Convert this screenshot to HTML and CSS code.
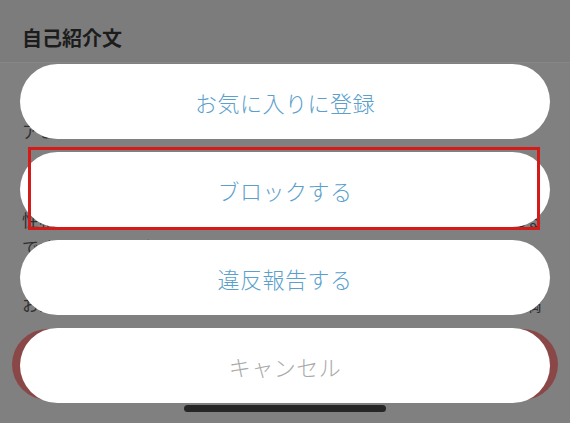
FILE: index.html
```html
<!DOCTYPE html>
<html lang="ja">
<head>
    <meta charset="UTF-8">
    <meta name="viewport" content="width=device-width, initial-scale=1.0">
    <title>プロフィール</title>
    <link rel="stylesheet" href="styles.css">
</head>
<body>

    <div class="page">
        <div class="page-header">自己紹介文</div>
        <div class="page-body">
            <p class="label">アピールポイント</p>
            <p class="para">性格は明るく、誰とでもすぐ仲良くなれるタイプだとよく言われる</p>
            <p class="para">です。よろしくお願いします。</p>
            <p class="para gap">お互い楽しく過ごせる方と出会えたら嬉しいです。休日を一緒に満</p>
            <div class="main-btn"></div>
        </div>
    </div>

    <!-- action sheet over the dimmed page -->
    <div class="sheet">
        <button class="sheet-btn">お気に入りに登録</button>
        <button class="sheet-btn">ブロックする</button>
        <button class="sheet-btn">違反報告する</button>
        <button class="sheet-btn cancel">キャンセル</button>
    </div>
    <div class="highlight"></div>
    <div class="home-bar"></div>

</body>
</html>
```

FILE: styles.css
```css
body {
    font-family: "Noto Sans CJK JP", "Noto Sans", sans-serif;
    background-color: #808080; /* dimmed page */
    margin: 0;
    padding: 0;
    width: 570px;
    height: 423px;
    overflow: hidden;
    position: relative;
}
.page-header {
    height: 63px;
    padding: 0 22px 10px;
    box-sizing: border-box;
    display: flex;
    align-items: flex-end;
    font-size: 20px;
    font-weight: bold;
    color: #1c1c1c;
    background: #7c7c7c;
    border-bottom: 1px solid #868686;
}
.page-body {
    padding: 0 22px;
    color: #303030;
}
.label {
    margin: 0;
    padding-top: 56px;
    font-size: 17px;
    line-height: 24px;
}
.para {
    margin: 0;
    font-size: 17px;
    line-height: 27px;
    letter-spacing: 0.4px;
    white-space: nowrap;
}
.label + .para {
    margin-top: 63px;
}
.para.gap {
    margin-top: 30px;
}
.main-btn {
    margin: 12px -10px 0;
    height: 71px;
    border-radius: 36px;
    background: #8a4747;
}
.sheet {
    position: absolute;
    top: 64px;
    left: 20px;
    right: 20px;
    display: flex;
    flex-direction: column;
    gap: 13px;
}
.sheet-btn {
    height: 75px;
    border: none;
    border-radius: 38px;
    background: #ffffff;
    font-family: inherit;
    font-size: 22px;
    font-weight: 300;
    color: #5c9fcd;
    letter-spacing: 0.5px;
}
.sheet-btn.cancel {
    color: #a9a9a9;
}
.highlight {
    position: absolute;
    top: 147px;
    left: 28px;
    width: 506px;
    height: 77px;
    border: 3px solid #d51a1a;
}
.home-bar {
    position: absolute;
    top: 405px;
    left: 184px;
    width: 202px;
    height: 7px;
    border-radius: 4px;
    background: #262626;
}
```
